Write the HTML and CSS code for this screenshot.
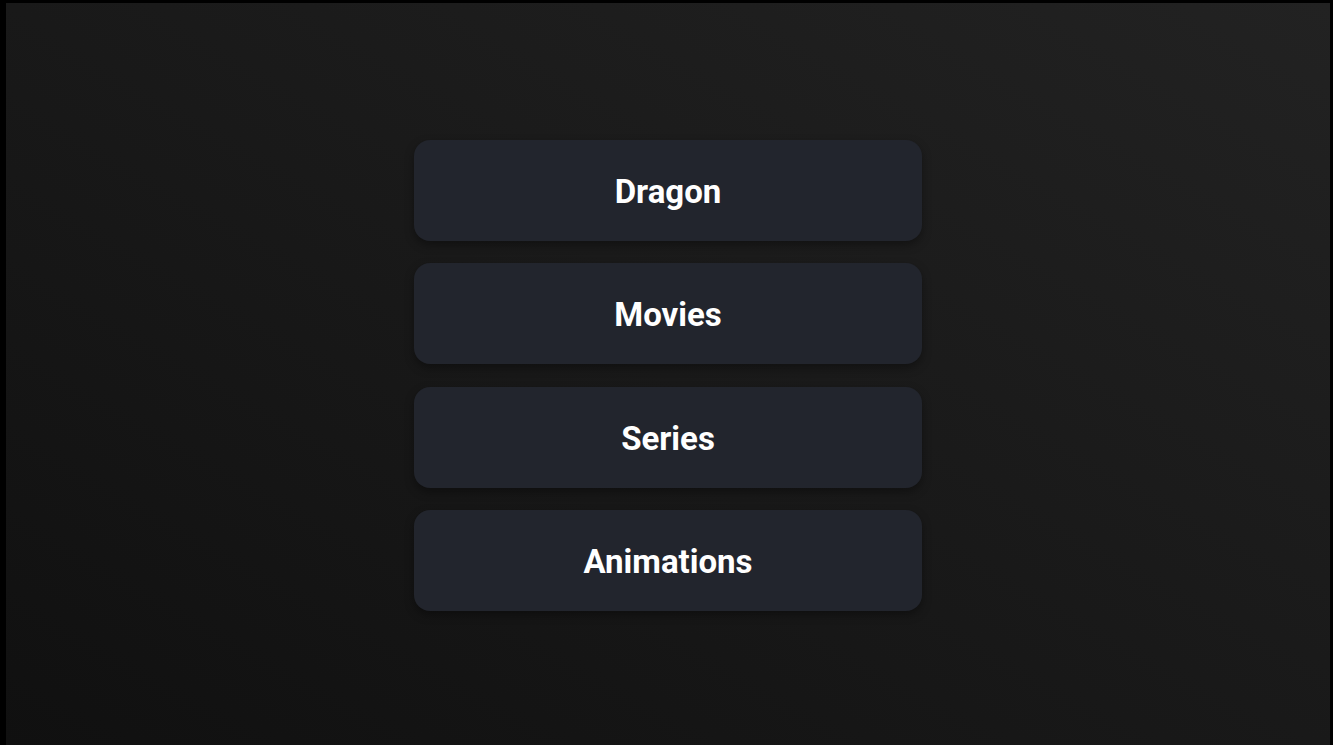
FILE: index.html
```html
<!DOCTYPE html>
<html lang="en">
<head>
  <meta charset="UTF-8" />
  <meta name="viewport" content="width=device-width, initial-scale=1.0"/>
  <title>Categories</title>
  <link rel="stylesheet" href="styles.css">
</head>
<body>

  <div class="screen">
    <div class="menu">
      <button class="menu-item">Dragon</button>
      <button class="menu-item">Movies</button>
      <button class="menu-item">Series</button>
      <button class="menu-item">Animations</button>
    </div>
  </div>

</body>
</html>
```

FILE: styles.css
```css
* {
  box-sizing: border-box;
}

html {
  background: #000;
}

body {
  margin: 0;
  padding: 3px 3px 0 6px;
  height: 745px;
  overflow: hidden;
  font-family: Roboto, "Noto Sans", sans-serif;
}

.screen {
  height: 745px;
  background: linear-gradient(to top right, #101010, #222222);
  display: flex;
  justify-content: center;
  align-items: center;
}

.menu {
  width: 508px;
  display: flex;
  flex-direction: column;
  gap: 22.5px;
}

.menu-item {
  height: 101px;
  padding: 2px 0 0;
  border: none;
  border-radius: 16px;
  background: #22252d;
  color: #fff;
  font-family: inherit;
  font-size: 33px;
  font-weight: 700;
  box-shadow: 0 4px 10px rgba(0, 0, 0, 0.35);
  cursor: pointer;
}
```
